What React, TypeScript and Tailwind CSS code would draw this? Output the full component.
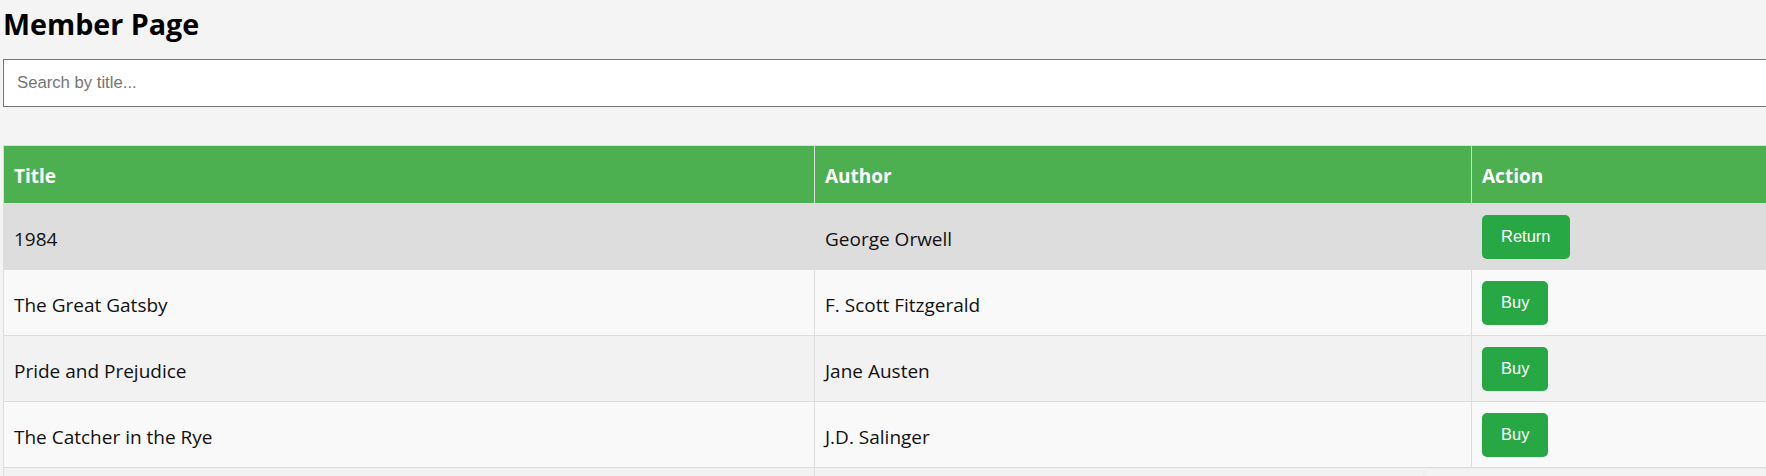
const books = [
  { title: '1984', author: 'George Orwell', borrowed: true },
  { title: 'The Great Gatsby', author: 'F. Scott Fitzgerald', borrowed: false },
  { title: 'Pride and Prejudice', author: 'Jane Austen', borrowed: false },
  { title: 'The Catcher in the Rye', author: 'J.D. Salinger', borrowed: false },
];

const rowBg = ['bg-[#dddddd]', 'bg-[#f9f9f9]', 'bg-[#f2f2f2]', 'bg-[#f9f9f9]'];

export default function App() {
  return (
    <div className="relative w-full h-[476px] overflow-hidden bg-[#f4f4f4] text-[#111] font-['Open_Sans',sans-serif]">
      <div className="w-[1820px] pl-[3px]">
        <h2 className="mt-[4px] text-[28.7px] leading-[40px] font-bold text-black">Member Page</h2>

        <input
          type="text"
          placeholder="Search by title..."
          className="mt-[15px] block w-[1810px] h-[48px] px-[13px] bg-white border border-[#767676] text-[16.7px] font-['Liberation_Sans',Arial,sans-serif] placeholder:text-[#757575] outline-none"
        />

        <table className="mt-[38px] w-[1810px] table-fixed border-collapse text-[19px]">
          <colgroup>
            <col className="w-[811px]" />
            <col className="w-[657px]" />
            <col />
          </colgroup>
          <thead>
            <tr className="bg-[#4CAF50] text-white">
              <th className="h-[58px] px-[10px] pt-[4px] text-left font-bold border border-[#ddd]">Title</th>
              <th className="h-[58px] px-[10px] pt-[4px] text-left font-bold border border-[#ddd]">Author</th>
              <th className="h-[58px] px-[10px] pt-[4px] text-left font-bold border border-[#ddd]">Action</th>
            </tr>
          </thead>
          <tbody>
            {books.map((b, i) => (
              <tr key={b.title} className={rowBg[i]}>
                <td className="h-[66px] px-[10px] pt-[5px] pb-0 border border-[#ddd]">{b.title}</td>
                <td className="h-[66px] px-[10px] pt-[5px] pb-0 border border-[#ddd]">{b.author}</td>
                <td className="h-[66px] px-[10px] border border-[#ddd]">
                  <button className="h-[44px] px-[19px] rounded-[5px] bg-[#28a745] text-white text-[16.5px] font-['Liberation_Sans',Arial,sans-serif]">
                    {b.borrowed ? 'Return' : 'Buy'}
                  </button>
                </td>
              </tr>
            ))}
            {/* next row, scrolled out of view */}
            <tr className="bg-[#f2f2f2]">
              <td className="h-[66px] border border-[#ddd]" />
              <td className="h-[66px] border border-[#ddd]" />
              <td className="h-[66px] border border-[#ddd]" />
            </tr>
          </tbody>
        </table>
      </div>

      {/* overlay scrollbar track */}
      <div className="absolute left-[1423px] right-0 bottom-0 h-[8px] rounded-tl-[8px] bg-[#f3f3f3] border-t border-l border-[#ececec]" />
    </div>
  );
}
